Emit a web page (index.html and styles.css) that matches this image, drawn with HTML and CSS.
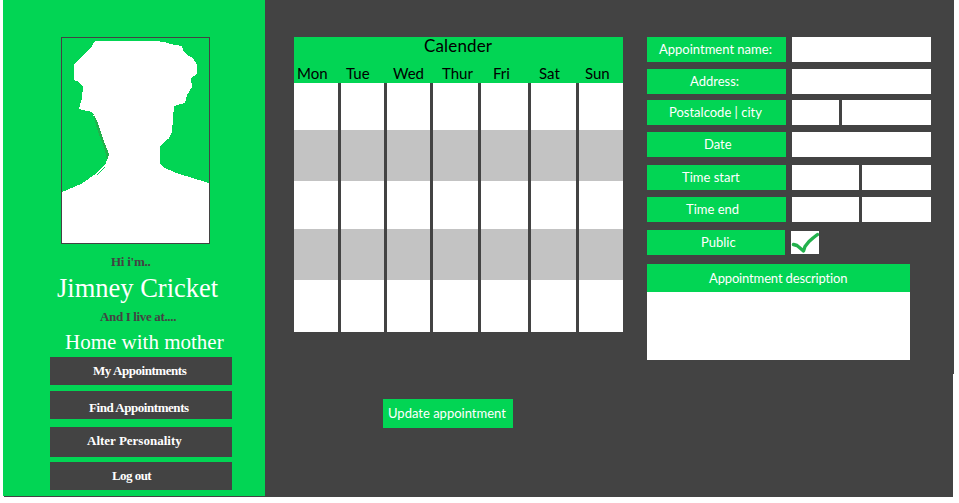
FILE: index.html
```html
<!DOCTYPE html>
<html lang="en">
<head>
<meta charset="utf-8">
<title>Appointments</title>
<link rel="stylesheet" href="styles.css">
</head>
<body>
<div class="app">
  <aside class="sidebar">
    <svg class="portrait" viewBox="0 0 149 207" shape-rendering="crispEdges">
      <rect x=".5" y=".5" width="148" height="206" fill="none" stroke="#434343"/>
      <path d="M34 4H95L103 5L109 7L121 9L122 13L126 18L132 21L136 28V37L130 41L131 50L126 58L124 66L113 69L111 95L107 103L99 110V126L102 130L115 136L148 146V206H1V155L20 147L36 136L45 126L47 117L43 106L37 92L31 75L18 72L21 61L22 50L18 45L13 43V27L20 20L29 12Z" fill="#fff"/>
      <path d="M32 76L36 84L44 107L48 117L46 124L44 113L36 92Z" fill="#22b14c"/>
      <path d="M44 130L36 138M99 110L107 102" fill="none" stroke="#02d554"/>
    </svg>
    <p class="lead hi"><span>Hi i'm..</span></p>
    <h1 class="name"><span>Jimney Cricket</span></h1>
    <p class="lead live"><span>And I live at....</span></p>
    <h2 class="home"><span>Home with mother</span></h2>
    <nav class="menu">
      <a class="item my"><span>My Appointments</span></a>
      <a class="item find"><span>Find Appointments</span></a>
      <a class="item alter"><span>Alter Personality</span></a>
      <a class="item logout"><span>Log out</span></a>
    </nav>
  </aside>
  <main class="main">
    <section class="left">
      <div class="calendar">
        <header class="cal-head">
          <div class="cal-title">Calender</div>
          <div class="days"><span class="mon">Mon</span><span class="tue">Tue</span><span class="wed">Wed</span><span class="thu">Thur</span><span class="fri">Fri</span><span class="sat">Sat</span><span class="sun">Sun</span></div>
        </header>
        <div class="cols"><i></i><i></i><i></i><i></i><i></i><i></i><i></i></div>
      </div>
      <button class="update">Update appointment</button>
    </section>
    <form class="form">
      <div class="row"><label class="label l-name">Appointment name:</label><span class="field"></span></div>
      <div class="row"><label class="label l-addr">Address:</label><span class="field"></span></div>
      <div class="row"><label class="label l-post">Postalcode | city</label><span class="field postal"></span><span class="field"></span></div>
      <div class="row"><label class="label l-date">Date</label><span class="field"></span></div>
      <div class="row"><label class="label l-start">Time start</label><span class="field time"></span><span class="field"></span></div>
      <div class="row"><label class="label l-end">Time end</label><span class="field time"></span><span class="field"></span></div>
      <div class="row public"><label class="label l-pub">Public</label>
        <svg class="check" viewBox="0 0 28 23"><path d="M2.5 13.5L6 14.500L9 17L12.500 20L14 15.500L18 10.500L22 7L26.500 3.500" fill="none" stroke="#22b14c" stroke-width="3.400" stroke-linecap="round" stroke-linejoin="round"/></svg>
      </div>
      <div class="desc"><label class="desc-head">Appointment description</label><div class="desc-body"></div></div>
    </form>
  </main>
</div>
</body>
</html>
```
FILE: styles.css
```css
* { box-sizing: border-box; margin: 0; padding: 0; }
body { background: #fff; width: 959px; height: 503px; overflow: hidden; }
.app { display: flex; width: 951px; height: 497px; margin-left: 3px; background: #434343; font-variant-ligatures: none; clip-path: polygon(0 0, 951px 0, 951px 374px, 950px 374px, 950px 497px, 1px 497px, 1px 496px, 0 496px); }
.sidebar { width: 262px; height: 496px; background: #02d554; padding-top: 37px; font-family: "Liberation Serif", serif; display: flex; flex-direction: column; }
.portrait { width: 149px; height: 207px; margin-left: 58px; flex: none; }
.sidebar p, .sidebar h1, .sidebar h2 { white-space: nowrap; flex: none; }
.lead { font-size: 13px; font-weight: bold; color: #434343; line-height: 16px; }
.hi { margin: 10px 0 0 108px; letter-spacing: -0.25px; }
.name { font-size: 26.5px; font-weight: normal; color: #fff; line-height: 30px; margin: 3px 0 0 54px; }
.live { margin: 6px 0 0 97px; letter-spacing: -0.35px; }
.home { font-size: 21px; font-weight: normal; color: #fff; line-height: 24px; margin: 5px 0 0 62px; }
.menu { margin: 3px 0 0 47px; width: 182px; display: grid; grid-template-rows: 28px 28px 30px 28px; row-gap: 6px; }
.item { background: #434343; color: #fff; font-size: 13px; font-weight: bold; line-height: 28px; white-space: nowrap; letter-spacing: -0.45px; }
.my { padding-left: 43px; }
.find { padding-left: 39px; line-height: 34px; }
.alter { padding-left: 37px; margin-top: 2px; margin-bottom: -2px; letter-spacing: 0; }
.logout { padding-left: 62px; margin-top: 1px; margin-bottom: -1px; letter-spacing: -0.55px; }
.main { display: flex; flex: 1; padding-top: 37px; font-family: Lato, "Open Sans", sans-serif; }
.left { width: 329px; margin-left: 29px; }
.cal-head { height: 46px; background: #02d554; color: #000; }
.cal-title { height: 26px; font-size: 17px; line-height: 18px; padding-left: 130px; letter-spacing: 0.15px; }
.days { display: grid; grid-template-columns: 49px 47px 49px 51px 46px 46px 1fr; padding-left: 3px; font-size: 15px; line-height: 21px; }
.cols { display: grid; grid-template-columns: 44px 43px 43px 45px 47px 45px 44px; column-gap: 3px; height: 249px; }
.cols i { background: linear-gradient(#fff 47px, #c3c3c3 47px 98px, #fff 98px 146px, #c3c3c3 146px 197px, #fff 197px); }
.update { display: block; width: 130px; height: 29px; margin: 67px 0 0 89px; border: 0; background: #02d554; color: #fff; font: 13px/29px Lato, sans-serif; text-align: left; padding-left: 5px; white-space: nowrap; }
.form { width: 284px; margin-left: 24px; display: grid; grid-template-rows: 32px 31px 32px 33px 32px 33px 34px 96px; align-content: start; color: #fff; font-size: 13px; }
.row { display: flex; gap: 3px; height: 25px; }
.label { width: 139px; margin-right: 3px; background: #02d554; line-height: 25px; white-space: nowrap; }
.l-name { padding-left: 12px; }
.l-addr { padding-left: 43px; }
.l-post { padding-left: 22px; }
.l-date { padding-left: 57px; }
.l-start { padding-left: 35px; }
.l-end { padding-left: 39px; }
.l-pub { width: 138px; padding-left: 54px; }
.field { background: #fff; flex: 1; }
.postal { flex: 0 0 47px; }
.time { flex: 0 0 67px; }
.check { width: 28px; height: 23px; margin-top: 1px; background: #fff; }
.desc { width: 263px; }
.desc-head { display: block; height: 28px; line-height: 29px; padding-left: 62px; background: #02d554; letter-spacing: -0.15px; }
.desc-body { height: 68px; background: #fff; }
```
